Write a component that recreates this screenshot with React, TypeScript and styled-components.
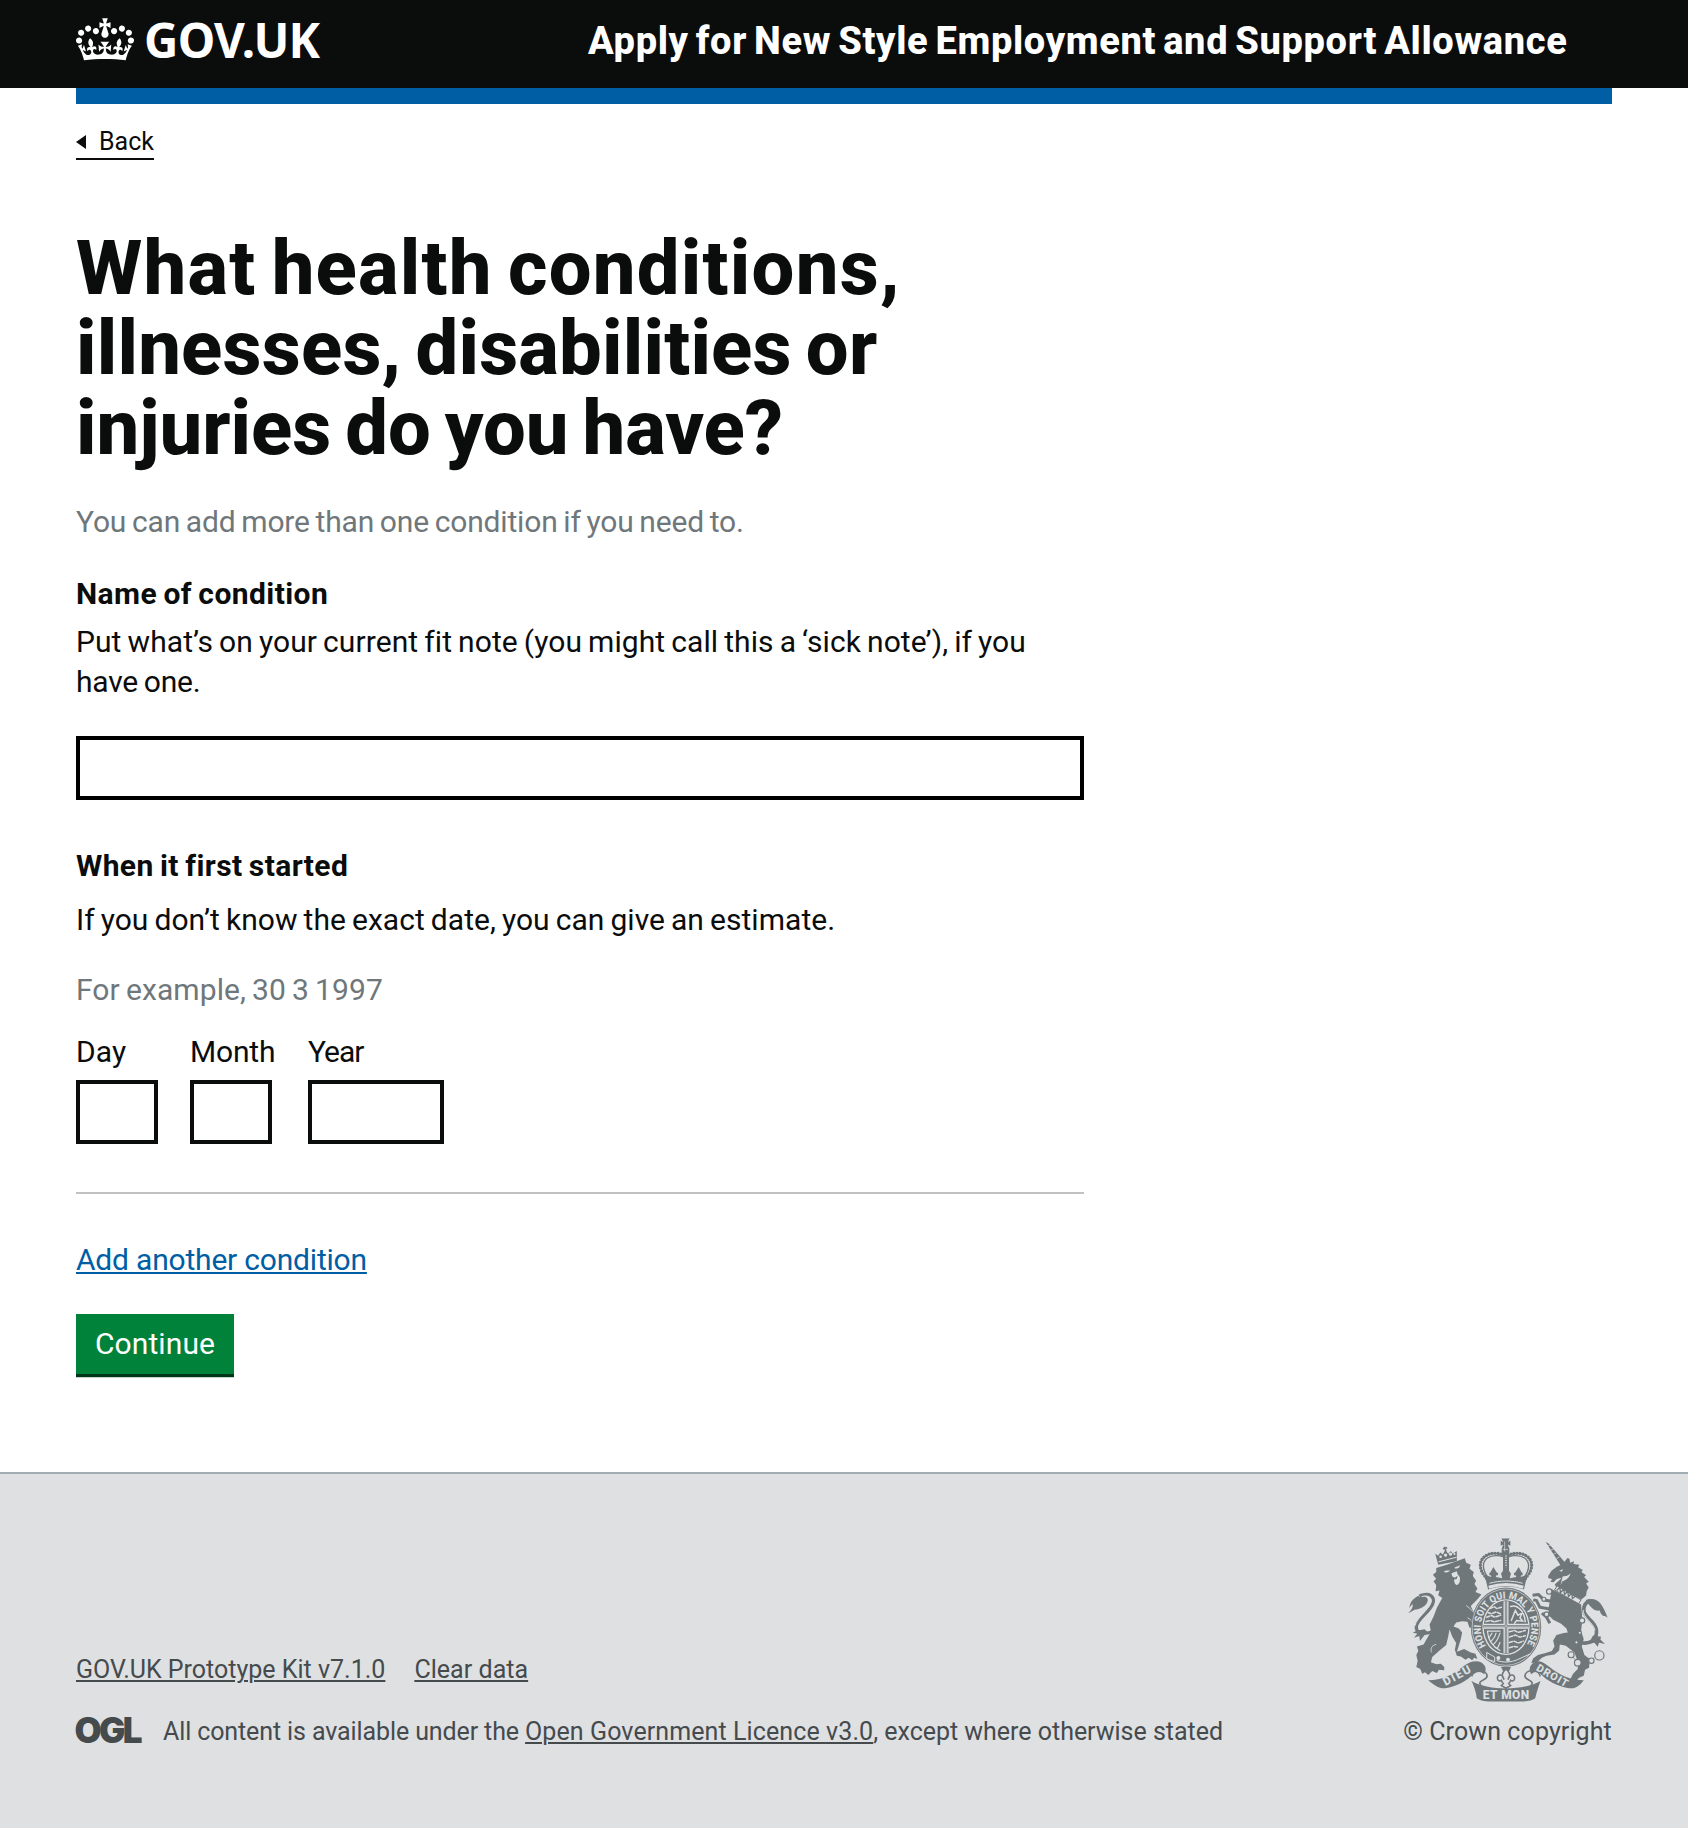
import React from 'react';
import styled, { createGlobalStyle } from 'styled-components';

const ink = '#0b0c0c';
const blue = '#005ea5';
const grey = '#6f777b';
const footerBg = '#dee0e2';
const footerInk = '#454a4d';

const GlobalStyle = createGlobalStyle`
  *, *::before, *::after { box-sizing: border-box; }
  body {
    margin: 0;
    background: #fff;
    color: ${ink};
    font-family: Roboto, "Liberation Sans", sans-serif;
    font-size: 30px;
    line-height: 40px;
  }
`;

/* $track fine-tunes the letter spacing of a run of text */
type Tracked = { $track?: number };

const Container = styled.div`
  width: 1536px;
  margin: 0 auto;
`;

const Header = styled.header`
  height: 88px;
  background: ${ink};
  color: #fff;
`;

const HeaderGrid = styled(Container)`
  display: grid;
  grid-template-columns: 512px 1fr;
  align-items: start;
`;

const Logo = styled.a`
  display: flex;
  align-items: flex-start;
  gap: 10px;
  color: #fff;
  text-decoration: none;
`;

const CrownSvg = styled.svg`
  display: block;
  width: 58px;
  height: 43px;
  margin-top: 18px;
`;

const LogoText = styled.span`
  font: 700 47.5px/79px "Noto Sans", sans-serif;
  letter-spacing: -0.75px;
`;

const ServiceName = styled.a<Tracked>`
  color: #fff;
  font-size: 38px;
  font-weight: 800;
  line-height: 82px;
  letter-spacing: ${p => p.$track ?? 0}px;
  word-spacing: -3px;
  white-space: nowrap;
`;

const BlueBar = styled(Container)`
  height: 16px;
  background: ${blue};
`;

const BackLink = styled.a`
  display: inline-flex;
  align-items: center;
  gap: 13px;
  width: 78px;
  height: 34px;
  margin-top: 22px;
  border-bottom: 2px solid ${ink};
  font-size: 25px;
  line-height: 32px;
`;

const BackArrow = styled.span`
  border: solid transparent;
  border-width: 7.5px 10px 7.5px 0;
  border-right-color: ${ink};
`;

const Main = styled.main`
  display: flex;
  flex-direction: column;
  align-items: flex-start;
  width: 1008px;
`;

const Title = styled.h1`
  margin: 68px 0 0;
  font-size: 76px;
  line-height: 80px;
  font-weight: 800;
  word-spacing: -5px;
`;

const Line = styled.span<Tracked>`
  display: block;
  letter-spacing: ${p => p.$track ?? 0}px;
  white-space: nowrap;
`;

const Text = styled.p<Tracked & { $top: number; $hint?: boolean; $bold?: boolean }>`
  margin: ${p => p.$top}px 0 0;
  color: ${p => (p.$hint ? grey : ink)};
  font-weight: ${p => (p.$bold ? 700 : 400)};
  letter-spacing: ${p => p.$track ?? 0}px;
  word-spacing: -1.5px;
`;

const TextInput = styled.input<{ $width: string; $top: number; $color?: string }>`
  display: block;
  width: ${p => p.$width};
  height: 64px;
  margin: ${p => p.$top}px 0 0;
  padding: 8px;
  border: 4px solid ${p => p.$color ?? ink};
  border-radius: 0;
  background: #fff;
  font: inherit;
`;

const DateGrid = styled.div`
  display: grid;
  grid-template-columns: 114px 118px 136px;
  margin-top: 22px;
`;

const DateLabel = styled.label<Tracked>`
  display: block;
  letter-spacing: ${p => p.$track ?? 0}px;
`;

const Divider = styled.hr`
  width: 100%;
  height: 2px;
  margin: 48px 0 0;
  border: 0;
  background: #bfc1c3;
`;

const AddLink = styled.a`
  margin-top: 46px;
  color: ${blue};
  letter-spacing: -0.2px;
  text-decoration: underline;
  text-decoration-thickness: 2px;
  text-underline-offset: 2px;
  text-decoration-skip-ink: none;
`;

const Button = styled.button`
  width: 158px;
  height: 60px;
  margin: 34px 0 98px;
  padding: 0;
  border: 0;
  background: #00823b;
  box-shadow: 0 3px 0 #003618, 0 4px 0 #c5d3ca;
  color: #fff;
  font: inherit;
  line-height: 60px;
  letter-spacing: 0.1px;
`;

const Footer = styled.footer`
  height: 356px;
  border-top: 2px solid #a1acb2;
  background: ${footerBg};
  color: ${footerInk};
  font-size: 25px;
  line-height: 32px;
`;

const FooterRow = styled(Container)`
  display: flex;
  justify-content: space-between;
  align-items: flex-end;
  height: 274px;
  white-space: nowrap;
`;

const FooterLinks = styled.div`
  display: flex;
  gap: 29px;
  margin-bottom: 30px;
`;

const FooterLink = styled.a<Tracked>`
  letter-spacing: ${p => p.$track ?? 0}px;
  text-decoration: underline;
  text-decoration-thickness: 2px;
  text-underline-offset: 2px;
`;

const Licence = styled.div`
  display: flex;
  align-items: flex-start;
  gap: 21px;
`;

const OglMark = styled.span`
  width: 66px;
  height: 32px;
  font: 900 35px/29px Inter, sans-serif;
  letter-spacing: -2.7px;
  text-indent: -1.5px;
`;

const Run = styled.span<Tracked>`
  letter-spacing: ${p => p.$track ?? 0}px;
`;

const Copyright = styled.a`
  display: flex;
  flex-direction: column;
  align-items: center;
  gap: 14px;
  width: 209px;
  letter-spacing: 0.1px;
`;

const ArmsSvg = styled.svg`
  display: block;
  width: 200px;
  height: 164px;
`;

const Crown = () => (
  <CrownSvg viewBox="0 0 132 97" aria-hidden="true">
    <path
      fill="currentColor"
      fillRule="evenodd"
      d="M25 30.2c3.5 1.5 7.7-.2 9.1-3.7 1.5-3.6-.2-7.8-3.9-9.2-3.6-1.4-7.6.3-9.1 3.9-1.4 3.5.3 7.5 3.9 9zM9 39.5c3.6 1.5 7.8-.2 9.2-3.7 1.5-3.6-.2-7.8-3.9-9.1-3.6-1.5-7.6.2-9.1 3.8-1.4 3.5.3 7.5 3.8 9zM4.4 57.2c3.5 1.5 7.7-.2 9.1-3.8 1.5-3.6-.2-7.7-3.9-9.1-3.5-1.5-7.6.3-9.1 3.8-1.4 3.5.3 7.6 3.9 9.1zm38.3-21.4c3.5 1.5 7.7-.2 9.1-3.8 1.5-3.6-.2-7.7-3.9-9.1-3.6-1.5-7.6.3-9.1 3.8-1.3 3.6.4 7.7 3.9 9.1zm64.4-5.6c-3.6 1.5-7.8-.2-9.1-3.7-1.5-3.6.2-7.8 3.8-9.2 3.6-1.4 7.7.3 9.2 3.9 1.3 3.5-.4 7.5-3.9 9zm15.9 9.3c-3.6 1.5-7.7-.2-9.1-3.7-1.5-3.6.2-7.8 3.7-9.1 3.6-1.5 7.7.2 9.2 3.8 1.5 3.5-.3 7.5-3.8 9zm4.7 17.7c-3.6 1.5-7.8-.2-9.2-3.8-1.5-3.6.2-7.7 3.9-9.1 3.6-1.5 7.7.3 9.2 3.8 1.3 3.5-.4 7.6-3.9 9.1zM89.3 35.8c-3.6 1.5-7.8-.2-9.2-3.8-1.4-3.6.2-7.7 3.9-9.1 3.6-1.5 7.7.3 9.2 3.8 1.4 3.6-.3 7.7-3.9 9.1zM69.7 17.7l8.9 4.7V9.3l-8.9 2.8c-.2-.3-.5-.6-.9-.9L72.4 0H59.6l3.5 11.2c-.3.3-.6.5-.9.9l-8.8-2.8v13.1l8.8-4.7c.3.3.6.7.9.9l-5 15.4v.1c-.2.8-.4 1.6-.4 2.4 0 4.1 3.1 7.5 7 8.1h.2c.3 0 .7.1 1 .1.4 0 .7 0 1-.1h.2c4-.6 7.1-4.1 7.1-8.1 0-.8-.1-1.7-.4-2.4V34l-5.1-15.4c.4-.2.7-.6 1-.9zM66 92.8c16.9 0 32.8 1.1 47.1 3.2 4-16.9 8.9-26.7 14-33.5l-9.6-3.4c1 4.9 1.1 7.2 0 10.2-1.5-1.4-3-4.3-4.2-8.7L108.6 76c2.8-2 5-3.2 7.5-3.3-4.4 9.4-10 11.9-13.6 11.2-4.3-.8-6.3-4.6-5.6-7.9 1-4.7 5.7-5.9 8-.5 4.3-8.7-3-11.4-7.6-8.8 7.1-7.2 7.9-13.5 2.1-21.1-8 6.1-8.1 12.3-4.5 20.8-4.7-5.4-12.1-2.5-9.5 6.2 3.4-5.2 7.9-2 7.2 3.1-.6 4.3-6.4 7.8-13.5 7.2-10.3-.9-10.9-8-11.2-13.8 2.5-.5 7.1 1.8 11 7.3L80.2 60c-4.1 4.4-8 5.3-12.3 5.4 1.4-4.4 8-11.6 8-11.6H55.5s6.4 7.2 7.9 11.6c-4.2-.1-8-1-12.3-5.4l1.4 16.4c3.9-5.5 8.5-7.7 10.9-7.3-.3 5.8-.9 12.8-11.1 13.8-7.2.6-12.9-2.9-13.5-7.2-.7-5 3.8-8.3 7.1-3.1 2.7-8.7-4.6-11.6-9.4-6.2 3.7-8.5 3.6-14.7-4.6-20.8-5.8 7.6-5 13.9 2.2 21.1-4.7-2.6-11.9.1-7.7 8.8 2.3-5.5 7.1-4.2 8.1.5.7 3.3-1.3 7.1-5.7 7.9-3.5.7-9-1.8-13.5-11.2 2.5.1 4.7 1.3 7.5 3.3l-4.7-15.4c-1.2 4.4-2.7 7.2-4.3 8.7-1.1-3-.9-5.3 0-10.2l-9.5 3.4c5 6.9 9.9 16.7 14 33.5 14.8-2.1 30.8-3.2 47.7-3.2z"
    />
  </CrownSvg>
);

const chain: [number, number, number][] = [
  [508, 213, 8], [492, 236, 6], [500, 281, 7], [607, 300, 8], [600, 337, 5],
  [590, 366, 5], [574, 403, 9], [594, 427, 10], [635, 421, 8], [659, 405, 14],
];

const RoyalArms = () => (
  <ArmsSvg viewBox="83 53 602 491" aria-hidden="true" fill={grey}>
    {/* lion: crown, mane, body and hind legs */}
    <path d="M174 132l-9-33 9 6 6-10 8 6 7-14 9 12 8-8 6 8 12-8v30l-8 2z" />
    <path d="M193 78l4 14M188 84l13-3" stroke={grey} strokeWidth="5" />
    <g fill={footerBg}>
      <circle cx="181" cy="108" r="4" /><circle cx="196" cy="103" r="5" />
      <circle cx="211" cy="100" r="5" /><circle cx="223" cy="100" r="3" />
      <path d="M175 122l54-14v3l-53 14z" />
    </g>
    <path d="M168 142l32-10 54-19 4 13 14 6-4 12 13 10-3 12 10 14-5 10 9 14-6 10 18 8-14 16-18 18 10 22 12 18 12 40-10 12-4-16-10 4-2-16-12 2-6-18-16-2-18 4-8 12 16 6 10 12-4 20-8 26-4 12 22-8 20 10 14 4 6 16-10-4-6 8-10-8-10 6-14-10-12-2-6-18 4-20-12-20-8-22-4 22-6 26-20 16-22 20-4 16 16 6 14-2 10 10 0 10-16-2-6 10-14-6-12 12-10-8-8 4-6-14-12-6 4-18-4-18 6-12-4-14 20-6 8-14 14-24-4-22 12-24 10-26 16-30-12-8 4-14-12 2 2-18-8-12 8-8-10-12 10-8z" />
    <g fill={footerBg}>
      <path d="M190 153c10-7 14-1 20-6-4 9-12 10-20 6zM222 142c6-6 12-3 18-8-1 8-9 12-18 8z" />
      <path d="M214 158l16-6 2 8 7 10c2 12-2 22-9 23-6-1-9-10-8-18l-6-6z" />
    </g>
    <path d="M214 166l10 5 8-6-2 10-12 2z" />
    <path d="M258 255c16 10 27 25 36 42M262 292c10 3 16 12 17 22M168 372c-16 3-18 16-14 24" stroke={footerBg} strokeWidth="2.5" fill="none" />
    {/* lion tail */}
    <path d="M83 278c10-10 16-18 14-28-4 4-8 8-10 14 2-22 14-34 38-42-6 4-8 6-10 8 14-6 26-2 28 8-4 22-26 26-40 30-8 4-14 8-20 10z" />
    <path d="M118 226c30-12 46 2 40 22-8 26-46 44-50 70-2 24 24 24 48 16" fill="none" stroke={grey} strokeWidth="10" />
    <path d="M124 228c20-6 32 4 28 18-8 24-44 46-48 70" fill="none" stroke={footerBg} strokeWidth="3" />
    <path d="M112 330l-15 6 14 4-10 12 16-5 2 15 14-18 12-6-12-12z" />

    {/* royal crown */}
    <path d="M364 53h25l-6 11 8-4v15l-8-4 5 12v17h-23V83l5-12-8 4V60l8 4z" />
    <path d="M374 62v30M368 86h16" stroke={footerBg} strokeWidth="2" />
    <path d="M378 110c-12-14-44-17-62-4-20 14-20 38-2 60l12 18M378 110c12-14 44-17 62-4 20 14 20 38 2 60l-12 18" fill="none" stroke={grey} strokeWidth="10" strokeLinecap="round" strokeDasharray="0 9" />
    <path d="M378 114c-12-11-40-13-56-2-16 12-16 34 0 56l9 14M378 114c12-11 40-13 56-2 16 12 16 34 0 56l-9 14" fill="none" stroke={grey} strokeWidth="4" />
    <path d="M369 98h18v54h-18z" />
    <path d="M378 104v44" stroke={footerBg} strokeWidth="5" strokeDasharray="3 4" />
    <path d="M328 160h26M341 148v26M402 160h26M415 148v26M366 158h24" stroke={grey} strokeWidth="7" />
    <path d="M314 163l20 6-4-12 10-18 11 18-4 12 20 4-4-14 15-22 15 22-4 14 20-4-4-12 11-18 10 18-4 12 20-6-10 44c-34-12-74-12-108 0z" />
    <path d="M328 188c32-9 68-9 100 0" fill="none" stroke={footerBg} strokeWidth="3" />
    <path d="M326 200c32-10 72-10 104 0" fill="none" stroke={footerBg} strokeWidth="9" />

    {/* unicorn tail and forelegs */}
    <path d="M602 366c30 8 52-10 48-38-6-30-38-36-38-60 0-16 8-24 20-28" fill="none" stroke={grey} strokeWidth="11" />
    <path d="M646 330c-6-26-36-36-36-62" fill="none" stroke={footerBg} strokeWidth="3" />
    <path d="M618 238c34-10 48 6 66 54-8-8-12-2-18-10-4-4-4-8-6-12-14 2-26-6-42-32z" />
    <path d="M640 345l24 4-2 8 14 14-18-4-4 12-10-12-18 4z" />
    <path d="M516 242l-24-4-16-16-18 2M514 266l-34-6-10-20-10-2M516 272l-16 18-14-12M500 290l10 18" fill="none" stroke={grey} strokeWidth="9" strokeLinejoin="round" />

    {/* garter with its motto */}
    <ellipse cx="378" cy="320" rx="106" ry="119" />
    <ellipse cx="378" cy="320" rx="102" ry="115" fill="none" stroke={footerBg} strokeWidth="2" />
    <ellipse cx="378" cy="320" rx="71" ry="84" fill={footerBg} />
    <ellipse cx="378" cy="320" rx="67" ry="80" />
    <path id="garter" d="M318 376A76 88 0 1 1 438 376" fill="none" />
    <text fontSize="30" fontWeight="800" fontFamily="Roboto, sans-serif" fill={footerBg}>
      <textPath href="#garter" textLength="366" lengthAdjust="spacingAndGlyphs">HONI SOIT QUI MAL Y PENSE</textPath>
    </text>
    <path d="M320 396l24 14 0 14-24-8zM350 420c20 8 44 6 62-2l40-18" fill="none" stroke={footerBg} strokeWidth="3" />
    <circle cx="355" cy="413" r="6" fill={footerBg} /><circle cx="384" cy="418" r="6" fill={footerBg} />

    {/* quartered shield */}
    <g fill="none" stroke={footerBg} strokeWidth="4.5" strokeLinecap="round">
      <path d="M330 264l12-6 8 6 14-4M324 276l10 4 14-6 14 6M320 290l14-5 10 5 18-6M318 303l12-3 12 4 20-4" strokeDasharray="10 5" />
      <path d="M388 334l16-4 10 6 22-6M388 350l18-6 14 6 16-4M388 366l14-4 12 6 16-6M388 382l14-4 14 2" strokeDasharray="10 5" />
      <path d="M392 258c20-8 42 14 44 46M394 300l12-30 8 14 12-6-6 14 8 10-18-2-6 8" />
      <path d="M322 332h38M322 332c2 28 14 46 38 58M360 338c-4 12-10 26-20 34M348 338c-2 10-8 18-14 24M336 338l-8 12M352 384l8-18" strokeWidth="3.5" />
    </g>
    <path d="M378 242v156M311 317h134" stroke={footerBg} strokeWidth="15" />
    <path d="M378 240v160M309 317h138" stroke={grey} strokeWidth="7" />
    <path d="M378 240v160M309 317h138" stroke={footerBg} strokeWidth="2" />

    {/* unicorn: horn, head, collar and body */}
    <path d="M497 63l10 6 50 58-14 8z" />
    <path d="M504 75l8-1M512 88l9-3M520 101l9-4M530 113l9-4" stroke={footerBg} strokeWidth="2" />
    <path d="M505 166l10-16 16-12 18-8 14-18 6 2 2 12 12-4-2 8 18 2-4 8 14 8-4 6 14 10-6 5 14 14-8 6 8 12-6 10-2 14-14 12-76-36-4-10 14-12 6-8-14 4-10 10-10-2 6-7-12-4z" />
    <path d="M538 150l12-4-4 7zM548 168c8-2 16 0 24-10-2 12-12 20-24 24l-6 12 6-24z" fill={footerBg} />
    <path d="M532 196l72 42-8 12-72-42z" stroke={grey} strokeWidth="3" fill={footerBg} />
    <path d="M530 210l10-10 2 16 10-10 2 16 10-10 2 16 10-10 2 16 12-10" fill="none" stroke={grey} strokeWidth="4" />
    <path d="M516 206L604 252l4 44-4 36 8 24-6 22 8 26 16 12-2 26-12 6-4 18-14 6-12 14-14-10 8-16 14-14 0-22-10-28-26-20-18-4-2 18-14 12-24 4-14 6-14 14-18 2 6-14 14-10 24-6 18-6 8-14-4-18 10-16 22-6 12-2-4-12-16-14-24-12-14-14 0-20z" />
    <path d="M602 344c6 40-10 60 12 76M574 403l20 24 41-6" fill="none" stroke={grey} strokeWidth="2" />
    {chain.map(([cx, cy, r]) => (
      <circle key={`${cx}-${cy}`} cx={cx} cy={cy} r={r} fill={footerBg} stroke={grey} strokeWidth="3.5" />
    ))}

    {/* fleur-de-lis and scrolls */}
    <path d="M363 440h30l-6 12H369z" />
    <path d="M378 446c16 14 12 22 6 32 4-18 20-18 20-4-1 8-8 10-12 6-2 6-4 8-6 10l6 6-14 8-14-8 6-6c-2-2-4-4-6-10-4 4-11 2-12-6 0-14 16-14 20 4-6-10-10-18 6-32z" fill={footerBg} stroke={grey} strokeWidth="4.5" />
    <path d="M275 468c4-24 46-22 46 0-2 12-20 10-22 20 0 12 20 16 32 18M481 468c-4-24-46-22-46 0 2 12 20 10 22 20 0 12-20 16-32 18" fill={footerBg} stroke={grey} strokeWidth="5" />
    <path d="M144 480c40 0 72-14 106-42 20-16 48-22 62-4 8 10 4 20 0 28-12-12-24-8-38 4-22 22-60 38-90 38-16-4-28-14-40-24zM612 480c-40 0-72-14-106-42-20-16-38-22-52-4-8 10-4 20 0 28 12-12 20-8 34 4 22 22 62 38 92 38 16-4 24-14 32-24z" />
    <path d="M274 482c50 30 158 30 208 0-6 16-12 34-16 52-8 6-24 10-40 10H330c-16 0-32-4-40-10-2-18-8-36-16-52z" />
    <g fontFamily="Roboto, sans-serif" fontWeight="800" fill={footerBg}>
      <text fontSize="35" textLength="90" transform="translate(196 497) rotate(-28)">DIEU</text>
      <text fontSize="36" textLength="140" x="308" y="537">ET MON</text>
      <text fontSize="32" textLength="104" transform="translate(467 449) rotate(30)">DROIT</text>
    </g>
  </ArmsSvg>
);

export default function App() {
  return (
    <>
      <GlobalStyle />
      <Header>
        <HeaderGrid>
          <Logo>
            <Crown />
            <LogoText>GOV.UK</LogoText>
          </Logo>
          <ServiceName $track={0.65}>Apply for New Style Employment and Support Allowance</ServiceName>
        </HeaderGrid>
      </Header>
      <BlueBar />
      <Container>
        <Main>
          <BackLink>
            <BackArrow />
            Back
          </BackLink>
          <Title>
            <Line $track={1.25}>What health conditions,</Line>
            <Line $track={0.2}>illnesses, disabilities or</Line>
            <Line $track={0}>injuries do you have?</Line>
          </Title>
          <Text $top={34} $hint $track={-0.17}>You can add more than one condition if you need to.</Text>
          <Text $top={32} $bold $track={0.42}>Name of condition</Text>
          <Text $top={8} $track={0.08}>
            Put what’s on your current fit note (you might call this a ‘sick note’), if you
            <Line $track={-0.2}>have one.</Line>
          </Text>
          <TextInput $width="100%" $top={34} $color="#000" aria-label="Name of condition" />
          <Text $top={46} $bold $track={0.4}>When it first started</Text>
          <Text $top={14} $track={0.05}>If you don’t know the exact date, you can give an estimate.</Text>
          <Text $top={30} $hint $track={0.1}>For example, 30 3 1997</Text>
          <DateGrid>
            <div>
              <DateLabel $track={0.1}>Day</DateLabel>
              <TextInput $width="82px" $top={8} aria-label="Day" />
            </div>
            <div>
              <DateLabel $track={-0.17}>Month</DateLabel>
              <TextInput $width="82px" $top={8} aria-label="Month" />
            </div>
            <div>
              <DateLabel $track={-1}>Year</DateLabel>
              <TextInput $width="136px" $top={8} aria-label="Year" />
            </div>
          </DateGrid>
          <Divider />
          <AddLink>Add another condition</AddLink>
          <Button>Continue</Button>
        </Main>
      </Container>
      <Footer>
        <FooterRow>
          <div>
            <FooterLinks>
              <FooterLink>GOV.UK Prototype Kit v7.1.0</FooterLink>
              <FooterLink $track={0.04}>Clear data</FooterLink>
            </FooterLinks>
            <Licence>
              <OglMark>OGL</OglMark>
              <span>
                <Run $track={-0.11}>All content is available under the </Run>
                <FooterLink $track={0.095}>Open Government Licence v3.0</FooterLink>
                <Run $track={-0.02}>, except where otherwise stated</Run>
              </span>
            </Licence>
          </div>
          <Copyright>
            <RoyalArms />
            <span>© Crown copyright</span>
          </Copyright>
        </FooterRow>
      </Footer>
    </>
  );
}
